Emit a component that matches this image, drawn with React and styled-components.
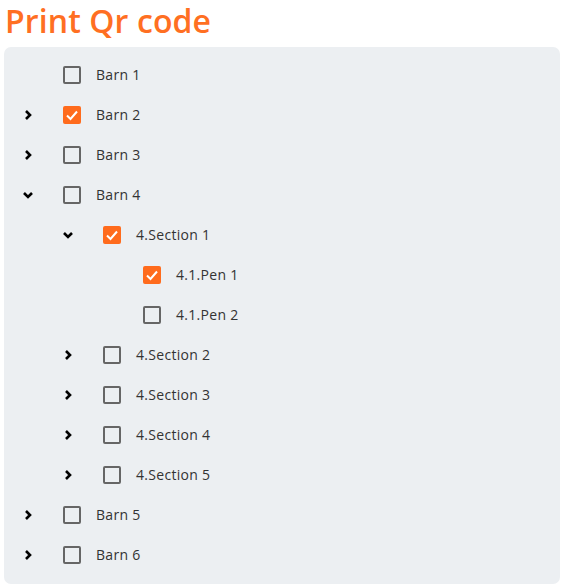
import React, { useState } from 'react';
import styled, { createGlobalStyle } from 'styled-components';

const GlobalStyle = createGlobalStyle`
  body {
    margin: 0;
    background: #ffffff;
    font-family: 'Open Sans', 'Noto Sans', sans-serif;
  }
`;

const Page = styled.div`
  padding: 0 8px 0 4px;
  width: 556px;
`;

const Title = styled.h1`
  margin: 0;
  padding: 0 0 0 1px;
  height: 47px;
  font-size: 32px;
  font-weight: 600;
  line-height: 42px;
  color: #ff6f22;
  letter-spacing: 0.1px;
`;

const Panel = styled.div`
  background: #eceff2;
  border-radius: 7px;
  padding: 8px 0 9px 0;
  display: flex;
  flex-flow: column nowrap;
`;

const Row = styled.div`
  height: 40px;
  display: flex;
  flex-flow: row nowrap;
  align-items: center;
  padding-left: ${({ level }) => 4 + level * 40}px;
`;

const Toggle = styled.div`
  width: 40px;
  height: 40px;
  display: flex;
  justify-content: center;
  align-items: center;
  cursor: pointer;
`;

const Box = styled.div`
  box-sizing: border-box;
  width: 18px;
  height: 18px;
  margin-left: 15px;
  border-radius: 2px;
  border: ${({ checked }) => (checked ? 'none' : '2px solid #666')};
  background: ${({ checked }) => (checked ? '#ff6b1d' : 'transparent')};
  display: flex;
  justify-content: center;
  align-items: center;
`;

const Label = styled.span`
  margin-left: 15px;
  margin-top: -1px;
  font-size: 14px;
  color: #333;
  letter-spacing: 0.3px;
`;

const Chevron = ({ open }) => (
  <svg width="12" height="12" viewBox="0 0 12 12">
    {open ? (
      <polyline points="2,4 6,8 10,4" fill="none" stroke="#000" strokeWidth="2.6" />
    ) : (
      <polyline points="4,2 8,6 4,10" fill="none" stroke="#000" strokeWidth="2.6" />
    )}
  </svg>
);

const Check = () => (
  <svg width="16" height="16" viewBox="0 0 16 16">
    <polyline points="3,8.5 6.5,12 13,4.5" fill="none" stroke="#fff" strokeWidth="2" />
  </svg>
);

const items = [
  { label: 'Barn 1', level: 0, toggle: null, checked: false },
  { label: 'Barn 2', level: 0, toggle: 'closed', checked: true },
  { label: 'Barn 3', level: 0, toggle: 'closed', checked: false },
  { label: 'Barn 4', level: 0, toggle: 'open', checked: false },
  { label: '4.Section 1', level: 1, toggle: 'open', checked: true },
  { label: '4.1.Pen 1', level: 2, toggle: null, checked: true },
  { label: '4.1.Pen 2', level: 2, toggle: null, checked: false },
  { label: '4.Section 2', level: 1, toggle: 'closed', checked: false },
  { label: '4.Section 3', level: 1, toggle: 'closed', checked: false },
  { label: '4.Section 4', level: 1, toggle: 'closed', checked: false },
  { label: '4.Section 5', level: 1, toggle: 'closed', checked: false },
  { label: 'Barn 5', level: 0, toggle: 'closed', checked: false },
  { label: 'Barn 6', level: 0, toggle: 'closed', checked: false },
];

const App = () => {
  const [rows, setRows] = useState(items);

  const flip = (i) =>
    setRows(rows.map((r, j) => (j === i ? { ...r, checked: !r.checked } : r)));

  return (
    <Page>
      <GlobalStyle />
      <Title>Print Qr code</Title>
      <Panel>
        {rows.map((r, i) => (
          <Row key={r.label} level={r.level}>
            <Toggle>{r.toggle && <Chevron open={r.toggle === 'open'} />}</Toggle>
            <Box checked={r.checked} onClick={() => flip(i)}>
              {r.checked && <Check />}
            </Box>
            <Label>{r.label}</Label>
          </Row>
        ))}
      </Panel>
    </Page>
  );
};

export default App;
